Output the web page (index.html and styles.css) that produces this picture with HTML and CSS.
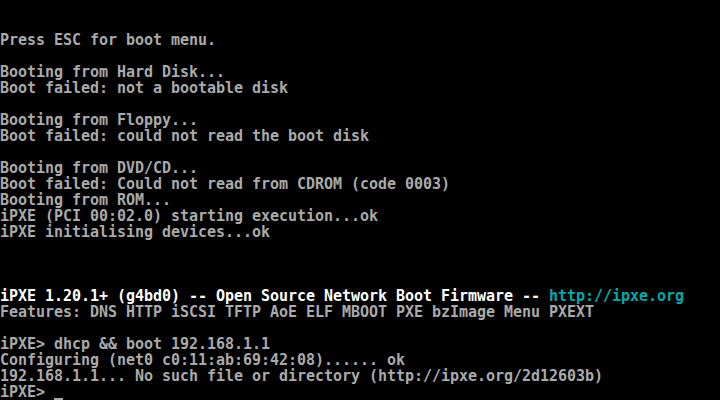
FILE: index.html
```html
<!DOCTYPE html>
<html>
<head>
<meta charset="utf-8">
<link rel="stylesheet" href="styles.css">
</head>
<body>
<pre class="console">


Press ESC for boot menu.

Booting from Hard Disk...
Boot failed: not a bootable disk

Booting from Floppy...
Boot failed: could not read the boot disk

Booting from DVD/CD...
Boot failed: Could not read from CDROM (code 0003)
Booting from ROM...
iPXE (PCI 00:02.0) starting execution...ok
iPXE initialising devices...ok



<span class="bright">iPXE 1.20.1+ (g4bd0) -- Open Source Network Boot Firmware -- <span class="cyan">http://ipxe.org</span></span>
Features: DNS HTTP iSCSI TFTP AoE ELF MBOOT PXE bzImage Menu PXEXT

iPXE&gt; dhcp &amp;&amp; boot 192.168.1.1
Configuring (net0 c0:11:ab:69:42:08)...... ok
192.168.1.1... No such file or directory (http://ipxe.org/2d12603b)
iPXE&gt; <span class="cursor"></span></pre>
</body>
</html>
```
FILE: styles.css
```css
html, body {
  margin: 0;
  padding: 0;
  background: #000;
  width: 720px;
  height: 400px;
  overflow: hidden;
}
.console {
  margin: 0;
  padding: 0;
  color: #aaaaaa;
  font-family: "DejaVu Sans Mono", "Liberation Mono", monospace;
  font-size: 15px;
  font-weight: bold;
  letter-spacing: -0.03px;
  line-height: 16px;
  white-space: pre;
}
.bright {
  color: #ffffff;
}
.cyan {
  color: #00aaaa;
}
.cursor {
  display: inline-block;
  width: 9px;
  height: 16px;
  vertical-align: top;
  box-sizing: border-box;
  border-bottom: 2px solid #aaaaaa;
}
```
